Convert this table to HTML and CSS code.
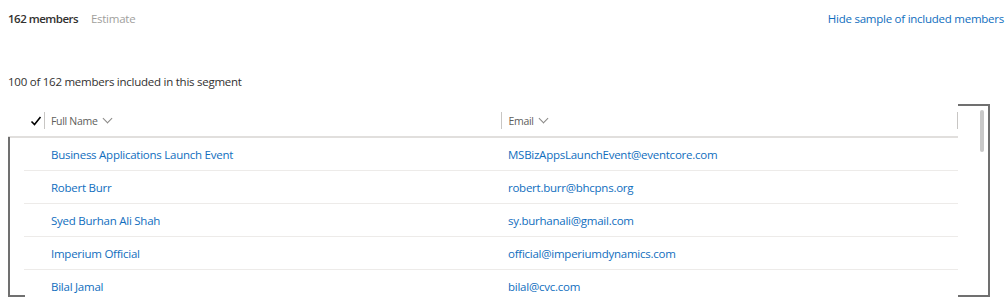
FILE: index.html
```html
<!DOCTYPE html>
<html lang="en">
<head>
    <meta charset="UTF-8">
    <title>Segment members</title>
    <link rel="stylesheet" href="styles.css">
</head>
<body>
    <div class="summary">
        <div class="count">
            <span class="total">162 members</span>
            <span class="estimate">Estimate</span>
        </div>
        <a class="toggle" href="#">Hide sample of included members</a>
    </div>
    <div class="note">100 of 162 members included in this segment</div>

    <div class="grid">
        <div class="list">
            <div class="head">
                <div class="check-col">
                    <svg width="12" height="12" viewBox="0 0 12 12"><path d="M1.5 6.5 L4.5 9.5 L10.5 2" fill="none" stroke="#000" stroke-width="1.6"/></svg>
                </div>
                <div class="col name-col">Full Name <span class="chev"></span></div>
                <div class="col email-col">Email <span class="chev"></span></div>
            </div>
            <div class="row">
                <div class="name"><a href="#">Business Applications Launch Event</a></div>
                <div class="email"><a href="#">MSBizAppsLaunchEvent@eventcore.com</a></div>
            </div>
            <div class="row">
                <div class="name"><a href="#">Robert Burr</a></div>
                <div class="email"><a href="#">robert.burr@bhcpns.org</a></div>
            </div>
            <div class="row">
                <div class="name"><a href="#">Syed Burhan Ali Shah</a></div>
                <div class="email"><a href="#">sy.burhanali@gmail.com</a></div>
            </div>
            <div class="row">
                <div class="name"><a href="#">Imperium Official</a></div>
                <div class="email"><a href="#">official@imperiumdynamics.com</a></div>
            </div>
            <div class="row last">
                <div class="name"><a href="#">Bilal Jamal</a></div>
                <div class="email"><a href="#">bilal@cvc.com</a></div>
            </div>
        </div>
        <div class="scroll"><div class="thumb"></div></div>
    </div>
</body>
</html>
```

FILE: styles.css
```css
body {
    margin: 0;
    font-family: "Open Sans", "Noto Sans", sans-serif;
    font-size: 11.5px;
    letter-spacing: -0.25px;
    color: #323130;
    background: #fff;
}
a {
    color: #106ebe;
    text-decoration: none;
}
.summary {
    display: flex;
    justify-content: space-between;
    align-items: center;
    height: 36px;
    padding: 0 3px 0 8px;
}
.total {
    font-weight: 600;
    letter-spacing: -0.5px;
    margin-right: 10px;
}
.estimate {
    color: #a19f9d;
}
.note {
    margin-top: 37px;
    padding-left: 8px;
    line-height: 18px;
}
.grid {
    display: flex;
    margin: 13px 0 0 8px;
    width: 982px;
    height: 193px;
    position: relative;
    overflow: hidden;
}
.grid::before {
    content: "";
    position: absolute;
    left: 0;
    top: 33px;
    bottom: 0;
    width: 15px;
    border-left: 2px solid #707070;
    border-bottom: 2px solid #707070;
}
.grid::after {
    content: "";
    position: absolute;
    right: 0;
    top: 0;
    bottom: 0;
    width: 30px;
    border: 2px solid #707070;
    border-left: none;
}
.list {
    width: 950px;
}
.head {
    display: flex;
    align-items: center;
    height: 31px;
    margin-top: 1px;
    border-bottom: 2px solid #e1dfdd;
    color: #605e5c;
    font-size: 10.5px;
    letter-spacing: -0.3px;
}
.check-col {
    padding-left: 22px;
    height: 17px;
    display: flex;
    align-items: center;
    border-right: 1px solid #c8c6c4;
    box-sizing: border-box;
    width: 37px;
}
.col {
    display: flex;
    align-items: center;
    height: 17px;
    padding-left: 6px;
}
.name-col {
    width: 451px;
    border-right: 1px solid #c8c6c4;
}
.email-col {
    width: 449px;
    border-right: 1px solid #c8c6c4;
}
.chev {
    display: inline-block;
    width: 6px;
    height: 6px;
    border-right: 1px solid #8a8886;
    border-bottom: 1px solid #8a8886;
    transform: rotate(45deg);
    margin: -4px 0 0 6px;
}
.row {
    display: flex;
    align-items: center;
    height: 32px;
    margin-left: 16px;
    border-bottom: 1px solid #edebe9;
}
.row.last {
    border-bottom: none;
}
.name {
    width: 457px;
    padding-left: 27px;
}
.scroll {
    flex: 1;
    padding: 6px 0 0 22px;
}
.thumb {
    width: 4px;
    height: 42px;
    border-radius: 2px;
    background: #c8c8c8;
}
```
